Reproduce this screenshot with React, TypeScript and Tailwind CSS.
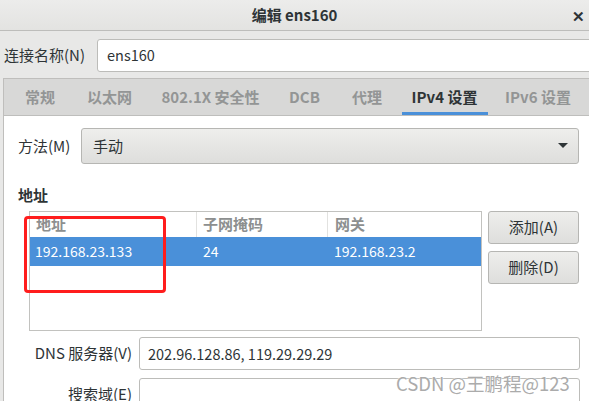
import React from 'react';

const tabs = [
  { label: '常规', w: 'w-[62px]' },
  { label: '以太网', w: 'w-[77px]' },
  { label: '802.1X 安全性', w: 'w-[125px]' },
  { label: 'DCB', w: 'w-[63px]' },
  { label: '代理', w: 'w-[62px]' },
  { label: 'IPv4 设置', w: 'w-[93px]', active: true },
  { label: 'IPv6 设置', w: 'w-[94px]' },
];

export default function App() {
  return (
    <div
      className="relative w-[589px] h-[401px] overflow-hidden bg-[#e8e8e7] text-[15px] text-[#2e3436]"
      style={{ fontFamily: '"Noto Sans CJK SC", "Noto Sans", sans-serif' }}
    >
      {/* header bar */}
      <div className="h-[31px] grid grid-cols-[1fr_auto_1fr] items-center bg-gradient-to-b from-[#ececeb] to-[#e3e3e1] border-b border-[#bdbdbb]">
        <div />
        <div className="font-bold text-[15px]">编辑 ens160</div>
        <div className="flex justify-end pr-[4px]">
          <span className="text-[15px] font-bold leading-none">✕</span>
        </div>
      </div>

      {/* connection name */}
      <div className="h-[47px] flex items-center pl-[4px] pt-[1px]">
        <span className="w-[93px] shrink-0">连接名称(N)</span>
        <div className="h-[33px] w-[520px] shrink-0 flex items-center bg-white border border-[#bcbcb9] rounded-[3px] pl-[9px] text-[14.5px]">
          ens160
        </div>
      </div>

      {/* notebook */}
      <div className="ml-[3px] border-l border-t border-[#bfbebc] bg-white h-[400px]">
        <div className="h-[37px] flex bg-[#d8d8d7] border-b border-[#bebebc] pl-[5px]">
          {tabs.map((t) => (
            <div key={t.label} className={`${t.w} shrink-0 relative flex items-center justify-center`}>
              <span className={t.active ? 'font-bold text-[#2e3436]' : 'font-bold text-[#939595]'}>{t.label}</span>
              {t.active && <div className="absolute left-[4px] right-[3px] bottom-[0px] h-[3px] bg-[#4a90d9]" />}
            </div>
          ))}
        </div>

        <div className="pl-[14px] pt-[12px]">
          {/* method */}
          <div className="flex items-center">
            <span className="w-[63px] shrink-0">方法(M)</span>
            <div className="h-[36px] w-[498px] shrink-0 flex items-center justify-between rounded-[3px] border border-[#b6b6b3] bg-gradient-to-b from-[#eeeeec] to-[#dededc] pl-[11px] pr-[10px]">
              <span>手动</span>
              <svg width="10" height="6" viewBox="0 0 10 6">
                <path d="M0 0 H10 L5 5 Z" fill="#2e3436" />
              </svg>
            </div>
          </div>

          <div className="mt-[20px] h-[21px] font-bold leading-[21px]">地址</div>

          {/* address table + buttons */}
          <div className="mt-[6px] flex items-start">
            <div className="ml-[11px] w-[453px] h-[120px] shrink-0 border border-[#c2c2bf] bg-white">
              <div className="h-[25px] flex text-[#8d8f8f] font-bold">
                <div className="w-[167px] pl-[6px] flex items-center border-r border-[#e2e2e0]">地址</div>
                <div className="w-[131px] pl-[6px] flex items-center border-r border-[#e2e2e0]">子网掩码</div>
                <div className="flex-1 pl-[7px] flex items-center">网关</div>
              </div>
              <div className="h-[29px] flex items-center bg-[#4a90d9] text-white text-[14px]">
                <div className="w-[167px] pl-[5px]">192.168.23.133</div>
                <div className="w-[131px] pl-[6px]">24</div>
                <div className="flex-1 pl-[6px]">192.168.23.2</div>
              </div>
            </div>
            <div className="ml-[6px] flex flex-col gap-[7px]">
              <button className="w-[91px] h-[33px] rounded-[3px] border border-[#b6b6b3] bg-gradient-to-b from-[#eeeeec] to-[#dededc] text-[#2e3436]">
                添加(A)
              </button>
              <button className="w-[91px] h-[33px] rounded-[3px] border border-[#b6b6b3] bg-gradient-to-b from-[#eeeeec] to-[#dededc] text-[#2e3436]">
                删除(D)
              </button>
            </div>
          </div>

          {/* DNS */}
          <div className="mt-[6px] flex items-center">
            <span className="w-[121px] shrink-0 text-right pr-[7px]">DNS 服务器(V)</span>
            <div className="h-[33px] w-[441px] shrink-0 flex items-center bg-white border border-[#bcbcb9] rounded-[3px] pl-[8px] text-[14.5px]">
              202.96.128.86, 119.29.29.29
            </div>
          </div>
          <div className="mt-[8px] flex items-center">
            <span className="w-[121px] shrink-0 text-right pr-[7px]">搜索域(E)</span>
            <div className="h-[33px] w-[441px] shrink-0 bg-white border border-[#bcbcb9] rounded-[3px]" />
          </div>
        </div>
      </div>

      {/* annotation */}
      <div className="absolute left-[24px] top-[216px] w-[142px] h-[77px] border-[3px] border-[#ff1d1d] rounded-[4px]" />

      {/* watermark */}
      <div
        className="absolute left-[396px] top-[372px] text-[18.5px] text-[#ababab] leading-[22px] whitespace-nowrap"
        style={{ textShadow: '0 0 2px #fff, 0 0 1px #fff' }}
      >
        CSDN @王鹏程@123
      </div>
    </div>
  );
}
